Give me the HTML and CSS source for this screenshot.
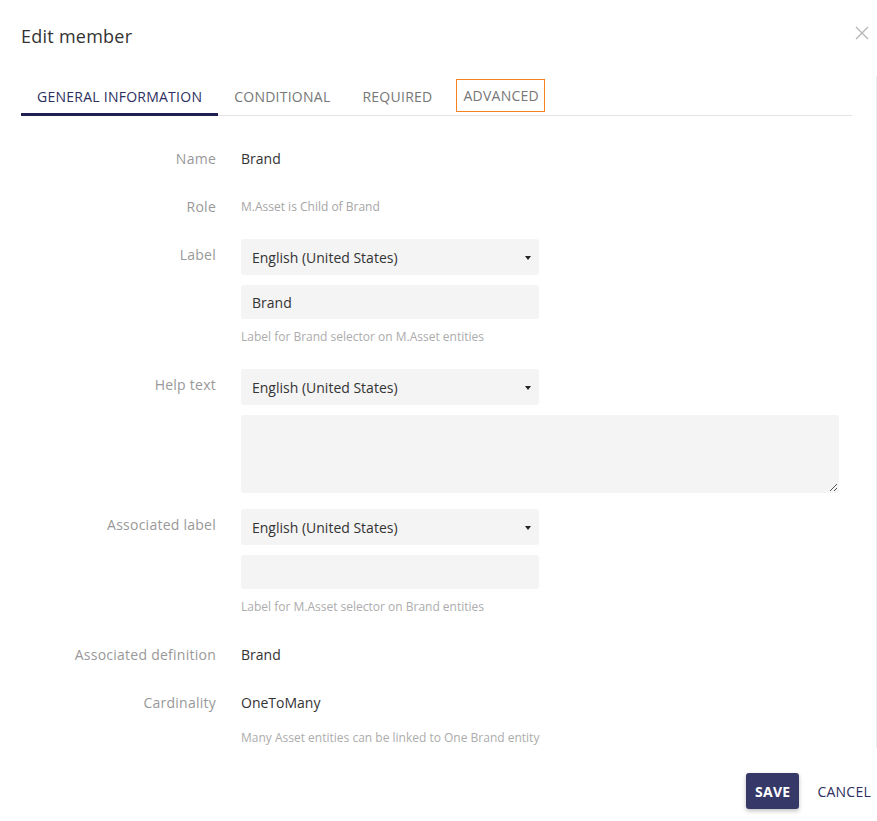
FILE: index.html
```html
<!DOCTYPE html>
<html lang="en">
<head>
    <meta charset="UTF-8">
    <meta name="viewport" content="width=device-width, initial-scale=1.0">
    <title>Edit member</title>
    <link rel="stylesheet" href="styles.css">
</head>
<body>
    <div class="dialog">
        <div class="dialog-header">
            <h1>Edit member</h1>
            <button class="close-btn" aria-label="Close">
                <svg width="14" height="14" viewBox="0 0 14 14">
                    <path d="M1 1L13 13M13 1L1 13" stroke="#b5b5b5" stroke-width="1.3" fill="none"/>
                </svg>
            </button>
        </div>

        <div class="dialog-body">
            <div class="tabs">
                <div class="tab active">General information</div>
                <div class="tab">Conditional</div>
                <div class="tab">Required</div>
                <div class="tab"><span class="focused">Advanced</span></div>
            </div>

            <div class="form">
                <div class="form-row">
                    <div class="form-label">Name</div>
                    <div class="form-value"><div class="text-value">Brand</div></div>
                </div>

                <div class="form-row">
                    <div class="form-label">Role</div>
                    <div class="form-value"><div class="text-value small">M.Asset is Child of Brand</div></div>
                </div>

                <div class="form-row">
                    <div class="form-label">Label</div>
                    <div class="form-value">
                        <div class="select">English (United States)<span class="caret"></span></div>
                        <div class="input">Brand</div>
                        <div class="hint">Label for Brand selector on M.Asset entities</div>
                    </div>
                </div>

                <div class="form-row">
                    <div class="form-label">Help text</div>
                    <div class="form-value">
                        <div class="select">English (United States)<span class="caret"></span></div>
                        <div class="textarea">
                            <svg class="grip" width="10" height="10" viewBox="0 0 10 10">
                                <path d="M9 2L2 9M9 6L6 9" stroke="#555" stroke-width="1" fill="none"/>
                            </svg>
                        </div>
                    </div>
                </div>

                <div class="form-row">
                    <div class="form-label">Associated label</div>
                    <div class="form-value">
                        <div class="select">English (United States)<span class="caret"></span></div>
                        <div class="input"></div>
                        <div class="hint">Label for M.Asset selector on Brand entities</div>
                    </div>
                </div>

                <div class="form-row">
                    <div class="form-label">Associated definition</div>
                    <div class="form-value"><div class="text-value">Brand</div></div>
                </div>

                <div class="form-row">
                    <div class="form-label">Cardinality</div>
                    <div class="form-value">
                        <div class="text-value">OneToMany</div>
                        <div class="hint tight">Many Asset entities can be linked to One Brand entity</div>
                    </div>
                </div>
            </div>
        </div>

        <div class="dialog-footer">
            <button class="btn-save">Save</button>
            <button class="btn-cancel">Cancel</button>
        </div>
    </div>
</body>
</html>
```

FILE: styles.css
```css
* {
    margin: 0;
    padding: 0;
    box-sizing: border-box;
    font-family: 'Open Sans', 'Noto Sans', sans-serif;
}

body {
    background: #fff;
    color: #333;
    width: 877px;
    height: 821px;
    overflow: hidden;
}

.dialog {
    display: flex;
    flex-direction: column;
    height: 821px;
}

/* header */
.dialog-header {
    height: 76px;
    display: flex;
    justify-content: space-between;
    align-items: flex-start;
    padding: 24px 8px 0 21px;
}

.dialog-header h1 {
    font-size: 18px;
    font-weight: 400;
    letter-spacing: 0.25px;
    color: #333;
    line-height: 24px;
}

.close-btn {
    border: none;
    background: none;
    width: 14px;
    height: 14px;
    margin-top: 2px;
    cursor: pointer;
}

.close-btn svg {
    display: block;
}

/* body */
.dialog-body {
    height: 672px;
    border-right: 1px solid #ececec;
    padding: 4px 24px 0 21px;
}

.tabs {
    display: flex;
    border-bottom: 1px solid #e2e2e2;
}

.tab {
    height: 36px;
    padding: 0 16px;
    display: flex;
    align-items: center;
    font-size: 14px;
    letter-spacing: 0.25px;
    text-transform: uppercase;
    color: #777;
    border-bottom: 3px solid transparent;
    margin-bottom: -1px;
}

.tab.active {
    color: #2d2f5e;
    border-bottom-color: #1f2051;
}

.tab .focused {
    display: block;
    padding: 6px 5px 6px 6px;
    margin: -3px -10px 0 -8px;
    border: 1px solid #f5821f;
}

/* form */
.form {
    padding: 27px 13px 0 0;
}

.form-row {
    display: grid;
    grid-template-columns: 195px 1fr;
    column-gap: 25px;
    margin-bottom: 16px;
}

.form-label {
    text-align: right;
    font-size: 14px;
    letter-spacing: 0.25px;
    line-height: 20px;
    padding-top: 6px;
    color: #999;
}

.text-value {
    font-size: 14px;
    line-height: 20px;
    padding: 6px 0;
    color: #333;
}

.text-value.small {
    font-size: 12px;
    color: #a6a6a6;
}

.select,
.input {
    position: relative;
    width: 298px;
    background: #f4f4f4;
    border-radius: 3px;
    font-size: 14px;
    color: #333;
    padding: 0 11px;
    display: flex;
    align-items: center;
}

.select {
    height: 36px;
}

.input {
    height: 34px;
    margin-top: 10px;
}

.caret {
    position: absolute;
    right: 8px;
    top: 17px;
    width: 0;
    height: 0;
    border-left: 3.5px solid transparent;
    border-right: 3.5px solid transparent;
    border-top: 4px solid #222;
}

.textarea {
    position: relative;
    height: 78px;
    margin-top: 10px;
    background: #f4f4f4;
    border-radius: 3px;
}

.grip {
    position: absolute;
    right: 1px;
    bottom: 1px;
}

.hint {
    font-size: 12px;
    line-height: 16px;
    color: #acacac;
    padding: 10px 0 8px;
}

.hint.tight {
    padding-top: 11px;
}

/* footer */
.dialog-footer {
    display: flex;
    justify-content: flex-end;
    align-items: flex-start;
    gap: 10px;
    padding-top: 25px;
}

.dialog-footer button {
    border: none;
    height: 36px;
    font-size: 14px;
    letter-spacing: 0.25px;
    text-transform: uppercase;
    cursor: pointer;
}

.btn-save {
    background: #363867;
    color: #fff;
    font-weight: 700;
    padding: 0 9px;
    border-radius: 3px;
    box-shadow: 0 2px 4px rgba(0,0,0,0.25);
}

.btn-cancel {
    background: none;
    color: #2d2f5e;
    padding: 0 6px 0 8px;
}
```
